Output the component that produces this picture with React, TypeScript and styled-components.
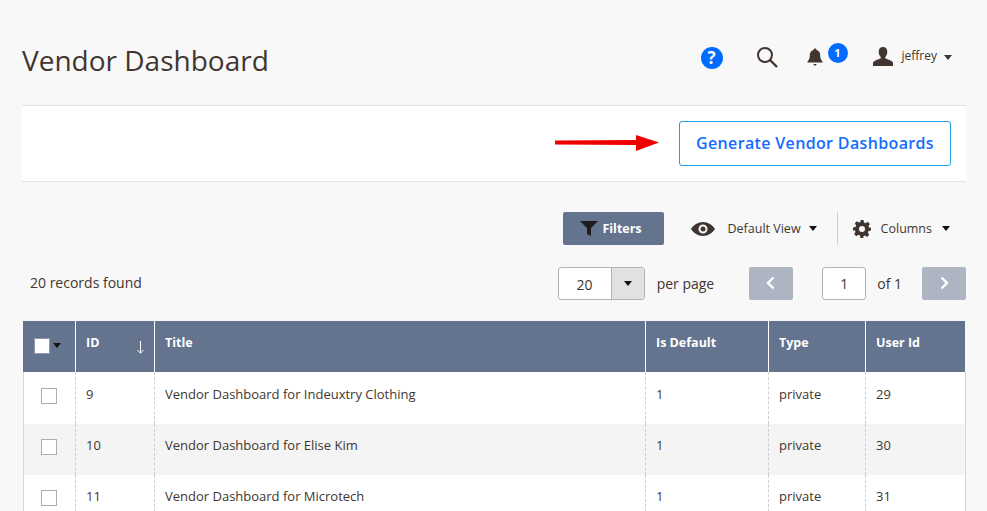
import React from "react";
import styled, { createGlobalStyle } from "styled-components";

const GlobalStyle = createGlobalStyle`
  html, body {
    margin: 0;
    padding: 0;
    background: #f8f8f8;
    height: 511px;
    overflow: hidden;
    font-family: "Open Sans", sans-serif;
    color: #41362f;
  }
`;

const Page = styled.div`
  width: 987px;
  height: 511px;
  overflow: hidden;
  box-sizing: border-box;
  padding: 0 21px 0 22px;
`;

const Header = styled.div`
  height: 105px;
  display: flex;
  justify-content: space-between;
  align-items: flex-start;
`;

const PageTitle = styled.h1`
  margin: 41px 0 0;
  font-size: 28px;
  line-height: 38px;
  font-weight: 400;
  color: #41362f;
`;

const Actions = styled.div`
  display: flex;
  align-items: center;
  margin-top: 42px;
  height: 30px;
  padding-right: 14px;
`;

const HelpIcon = styled.div`
  width: 22px;
  height: 22px;
  border-radius: 50%;
  background: #006bff;
  color: #fff;
  font-size: 17px;
  font-weight: 700;
  line-height: 22px;
  text-align: center;
  margin-top: 2px;
`;

const IconSlot = styled.div<{ $left: number }>`
  display: flex;
  margin-left: ${(p) => p.$left}px;
`;

const Badge = styled.span`
  position: absolute;
  left: 21px;
  top: -5px;
  width: 20px;
  height: 20px;
  border-radius: 50%;
  background: #006bff;
  color: #fff;
  font-size: 11px;
  font-weight: 700;
  line-height: 20px;
  text-align: center;
`;

const Bell = styled.div`
  position: relative;
  display: flex;
  margin-left: 29px;
  width: 16px;
`;

const UserName = styled.span`
  font-size: 12px;
  color: #41362f;
  margin-left: 9px;
  margin-top: -3px;
`;

const Caret = styled.span<{ $left?: number; $color?: string }>`
  display: inline-block;
  width: 0;
  height: 0;
  border-left: 4px solid transparent;
  border-right: 4px solid transparent;
  border-top: 5px solid ${(p) => p.$color || "#41362f"};
  margin-left: ${(p) => p.$left ?? 0}px;
`;

const GeneratePanel = styled.div`
  height: 75px;
  background: #fff;
  border-top: 1px solid #e3e3e3;
  border-bottom: 1px solid #e3e3e3;
  display: flex;
  align-items: center;
  justify-content: flex-end;
  padding-right: 15px;
`;

const GenerateButton = styled.button`
  width: 272px;
  height: 45px;
  box-sizing: border-box;
  background: #fff;
  border: 1px solid #1ba1e2;
  border-radius: 3px;
  color: #146cff;
  font-family: inherit;
  font-size: 16px;
  font-weight: 600;
  letter-spacing: 0.35px;
  padding: 0 0 2px;
  margin-left: 19px;
`;

const Toolbar = styled.div`
  height: 35px;
  margin-top: 29px;
  display: flex;
  align-items: center;
  justify-content: flex-end;
  padding-right: 16px;
`;

const FiltersButton = styled.button`
  width: 101px;
  height: 33px;
  border: 0;
  border-radius: 2px;
  background: #64738e;
  color: #fff;
  font-family: inherit;
  font-size: 12.5px;
  font-weight: 700;
  display: flex;
  align-items: center;
  justify-content: center;
  gap: 4px;
  padding: 0 4px 0 0;
  margin-right: 27px;
`;

const ToolLabel = styled.span<{ $left: number }>`
  font-size: 12.5px;
  color: #41362f;
  margin-left: ${(p) => p.$left}px;
`;

const Divider = styled.div`
  width: 1px;
  height: 33px;
  background: #cfcfcf;
  margin: 0 15px 0 20px;
`;

const PagerRow = styled.div`
  height: 34px;
  margin-top: 20px;
  display: flex;
  align-items: center;
  padding-left: 8px;
`;

const RecordCount = styled.span`
  font-size: 14px;
  color: #41362f;
  margin-right: auto;
  margin-bottom: 2px;
`;

const PerPage = styled.div`
  width: 87px;
  height: 33px;
  box-sizing: border-box;
  border: 1px solid #b3b3b3;
  border-radius: 3px;
  background: #fff;
  display: flex;
  overflow: hidden;
`;

const PerPageValue = styled.span`
  flex: 1;
  text-align: center;
  font-size: 14px;
  line-height: 33px;
`;

const PerPageArrow = styled.span`
  width: 32px;
  background: #e1e1e1;
  border-left: 1px solid #b3b3b3;
  display: flex;
  align-items: center;
  justify-content: center;
`;

const PagerText = styled.span<{ $left: number; $right: number }>`
  font-size: 14px;
  color: #41362f;
  margin: 0 ${(p) => p.$right}px 0 ${(p) => p.$left}px;
`;

const PageButton = styled.div`
  width: 44px;
  height: 33px;
  border-radius: 2px;
  background: #adb5c3;
  display: flex;
  align-items: center;
  justify-content: center;
`;

const PageInput = styled.div`
  width: 44px;
  height: 33px;
  box-sizing: border-box;
  border: 1px solid #b3b3b3;
  border-radius: 3px;
  background: #fff;
  font-size: 14px;
  line-height: 31px;
  text-align: center;
  margin-left: 29px;
`;

const Table = styled.table`
  width: 943px;
  margin: 21px 0 0 1px;
  border-collapse: separate;
  border-spacing: 0;
  table-layout: fixed;
`;

const HeadCell = styled.th`
  height: 51px;
  padding: 0 10px 8px;
  box-sizing: border-box;
  background: #64738e;
  color: #fff;
  font-size: 12.5px;
  font-weight: 700;
  text-align: left;
  border-left: 1px solid #fff;
  position: relative;
  &:first-child {
    border-left: 0;
    padding: 0 0 2px 11px;
  }
  &:last-child {
    border-right: 1px solid #f8f8f8;
  }
`;

const SortArrow = styled.svg`
  position: absolute;
  right: 9px;
  top: 20px;
`;

const Row = styled.tr<{ $alt?: boolean }>`
  background: ${(p) => (p.$alt ? "#f4f4f4" : "#fff")};
  &:first-child td {
    height: 52px;
    padding-bottom: 8px;
  }
  &:first-child td:first-child {
    padding-bottom: 4px;
  }
`;

const Cell = styled.td`
  height: 51px;
  padding: 0 10px 10px;
  box-sizing: border-box;
  font-size: 13px;
  color: #41362f;
  border-left: 1px dashed #cfcfcf;
  &:first-child {
    border-left: 1px solid #d6d6d6;
    padding: 0 0 5px 17px;
  }
  &:last-child {
    border-right: 1px solid #d6d6d6;
  }
`;

const HeadCheck = styled.div`
  display: flex;
  align-items: center;
  gap: 3px;
`;

const CheckBox = styled.span<{ $head?: boolean }>`
  display: block;
  box-sizing: border-box;
  width: 16px;
  height: 16px;
  background: #fff;
  border: 1px solid ${(p) => (p.$head ? "#8f99ab" : "#adadad")};
`;

const rows = [
  { id: 9, title: "Vendor Dashboard for Indeuxtry Clothing", userId: 29 },
  { id: 10, title: "Vendor Dashboard for Elise Kim", userId: 30 },
  { id: 11, title: "Vendor Dashboard for Microtech", userId: 31 },
];

const columns = [52, 79, 491, 123, 97, 101];

const Chevron = ({ d }: { d: string }) => (
  <svg width="12" height="14" viewBox="0 0 12 14" fill="none" stroke="#fff" strokeWidth="2.4">
    <path d={d} />
  </svg>
);

export default function App() {
  return (
    <Page>
      <GlobalStyle />
      <Header>
        <PageTitle>Vendor Dashboard</PageTitle>
        <Actions>
          <HelpIcon>?</HelpIcon>
          <IconSlot $left={33}>
            <svg width="22" height="22" viewBox="0 0 22 22" fill="none" stroke="#41362f">
              <circle cx="9" cy="9" r="7" strokeWidth="2" />
              <path d="M14 14l7 7" strokeWidth="2.4" />
            </svg>
          </IconSlot>
          <Bell>
            <svg width="16" height="18" viewBox="0 0 16 18" fill="#41362f">
              <path d="M8 0.5c1 0 1.5.7 1.5 1.5 2.6.7 3.700 2.800 3.700 5.500 0 3 .8 4.300 2.300 6v1H.5v-1c1.500-1.700 2.300-3 2.300-6 0-2.700 1.100-4.800 3.700-5.500 0-.8.500-1.500 1.500-1.500z" />
              <path d="M6.500 16h3c0 1-.6 1.600-1.500 1.600s-1.500-.6-1.500-1.600z" />
            </svg>
            <Badge>1</Badge>
          </Bell>
          <IconSlot $left={50}>
            <svg width="20" height="20" viewBox="0 0 20 20" fill="#41362f">
              <path d="M10 0c2.800 0 4.300 2 4.300 4.800 0 2.200-.9 4-2 5.100v1.600c2.600.9 6.700 2.100 7.700 4V19H0v-3.500c1-1.900 5.100-3.100 7.700-4V9.900c-1.100-1.100-2-2.900-2-5.100C5.700 2 7.200 0 10 0z" />
            </svg>
          </IconSlot>
          <UserName>jeffrey</UserName>
          <Caret $left={7} />
        </Actions>
      </Header>
      <GeneratePanel>
        <svg width="106" height="18" viewBox="0 0 106 18">
          <path d="M1 5.500L82 5V0l23 7.500L82 16v-6L1 9.500z" fill="#ee0000" />
        </svg>
        <GenerateButton>Generate Vendor Dashboards</GenerateButton>
      </GeneratePanel>
      <Toolbar>
        <FiltersButton>
          <svg width="18" height="15" viewBox="0 0 18 15" fill="#1d1d1d">
            <path d="M0 0h18l-7 7v8l-4-2V7z" />
          </svg>
          Filters
        </FiltersButton>
        <svg width="24" height="14" viewBox="0 0 24 14" fill="#41362f">
          <path fillRule="evenodd" d="M12 0c5 0 9.500 3 12 7-2.500 4-7 7-12 7S2.500 11 0 7c2.500-4 7-7 12-7zm0 2.500a4.500 4.500 0 100 9 4.500 4.500 0 000-9zm0 2a2.500 2.500 0 110 5 2.500 2.500 0 010-5z" />
        </svg>
        <ToolLabel $left={13}>Default View</ToolLabel>
        <Caret $left={8} $color="#111" />
        <Divider />
        <svg width="18" height="18" viewBox="0 0 24 24" fill="#41362f">
          <path fillRule="evenodd" d="M10 0h4l.7 3.300 2.100.9 2.900-1.800 2.800 2.800-1.800 2.900.9 2.100L24 10v4l-3.300.7-.9 2.100 1.800 2.900-2.800 2.800-2.900-1.800-2.100.9L14 24h-4l-.7-3.300-2.100-.9-2.900 1.800-2.800-2.800 1.800-2.900-.9-2.100L0 14v-4l3.300-.7.900-2.100-1.800-2.900 2.800-2.800 2.900 1.800 2.100-.9zM12 8a4 4 0 100 8 4 4 0 000-8z" />
        </svg>
        <ToolLabel $left={10}>Columns</ToolLabel>
        <Caret $left={10} $color="#111" />
      </Toolbar>
      <PagerRow>
        <RecordCount>20 records found</RecordCount>
        <PerPage>
          <PerPageValue>20</PerPageValue>
          <PerPageArrow>
            <Caret $color="#111" />
          </PerPageArrow>
        </PerPage>
        <PagerText $left={12} $right={35}>per page</PagerText>
        <PageButton>
          <Chevron d="M8.500 1.500L3 7l5.500 5.500" />
        </PageButton>
        <PageInput>1</PageInput>
        <PagerText $left={11} $right={20}>of 1</PagerText>
        <PageButton>
          <Chevron d="M3.500 1.500L9 7l-5.500 5.500" />
        </PageButton>
      </PagerRow>
      <Table>
        <colgroup>
          {columns.map((w, i) => (
            <col key={i} width={w} />
          ))}
        </colgroup>
        <thead>
          <tr>
            <HeadCell>
              <HeadCheck>
                <CheckBox $head />
                <Caret $color="#111" />
              </HeadCheck>
            </HeadCell>
            <HeadCell>
              ID
              <SortArrow width="9" height="13" viewBox="0 0 9 13" fill="none" stroke="#fff">
                <path d="M4.500 0v12M1.500 9l3 3.200 3-3.200" />
              </SortArrow>
            </HeadCell>
            <HeadCell>Title</HeadCell>
            <HeadCell>Is Default</HeadCell>
            <HeadCell>Type</HeadCell>
            <HeadCell>User Id</HeadCell>
          </tr>
        </thead>
        <tbody>
          {rows.map((row, i) => (
            <Row key={row.id} $alt={i % 2 === 1}>
              <Cell>
                <CheckBox />
              </Cell>
              <Cell>{row.id}</Cell>
              <Cell>{row.title}</Cell>
              <Cell>1</Cell>
              <Cell>private</Cell>
              <Cell>{row.userId}</Cell>
            </Row>
          ))}
        </tbody>
      </Table>
    </Page>
  );
}
